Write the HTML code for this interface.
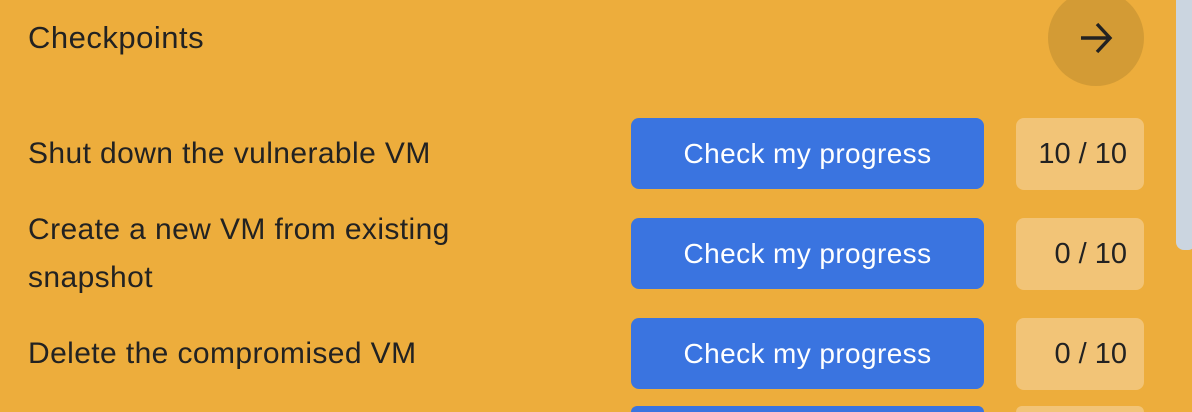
<html style="height:412px;overflow:hidden"><head><style>
body{margin:0;width:1192px;height:412px;background:#EDAD3C;font-family:"Liberation Sans",sans-serif;color:#222;position:relative;overflow:hidden}
.a{position:absolute}
.t{left:28px;font-size:30px;line-height:48px;letter-spacing:0.4px}
.b{left:631px;width:353px;height:71px;background:#3A74E0;border-radius:8px;color:#fff;font-size:28px;letter-spacing:0.4px;display:flex;align-items:center;justify-content:center}
.s{left:1016px;width:128px;height:72px;background:#F2C477;border-radius:8px;font-size:29px;display:flex;align-items:center;justify-content:flex-end;padding-right:17px;box-sizing:border-box}
</style></head><body>
<div class="a" style="left:28px;top:20px;font-size:31px;letter-spacing:0.5px">Checkpoints</div>
<div class="a" style="left:1048px;top:-10px;width:96px;height:96px;border-radius:50%;background:#D39B35"></div>
<svg class="a" style="left:1078px;top:20px" width="36" height="36" viewBox="0 0 36 36"><path d="M3 18H32M19 4L32 18L19 32" stroke="#222" stroke-width="3.4" fill="none"/></svg>
<div class="a" style="left:1176px;top:-10px;width:20px;height:260px;background:#CBD5E0;border-radius:8px"></div>
<div class="a t" style="top:130px">Shut down the vulnerable VM</div>
<div class="a t" style="top:206px">Create a new VM from existing<br>snapshot</div>
<div class="a t" style="top:330px">Delete the compromised VM</div>
<div class="a b" style="top:118px">Check my progress</div>
<div class="a b" style="top:218px">Check my progress</div>
<div class="a b" style="top:318px">Check my progress</div>
<div class="a b" style="top:406px;height:6px;border-radius:8px 8px 0 0"></div>
<div class="a s" style="top:118px">10 / 10</div>
<div class="a s" style="top:218px">0 / 10</div>
<div class="a s" style="top:318px">0 / 10</div>
<div class="a s" style="top:406px;height:6px;border-radius:8px 8px 0 0"></div>
</body></html>
